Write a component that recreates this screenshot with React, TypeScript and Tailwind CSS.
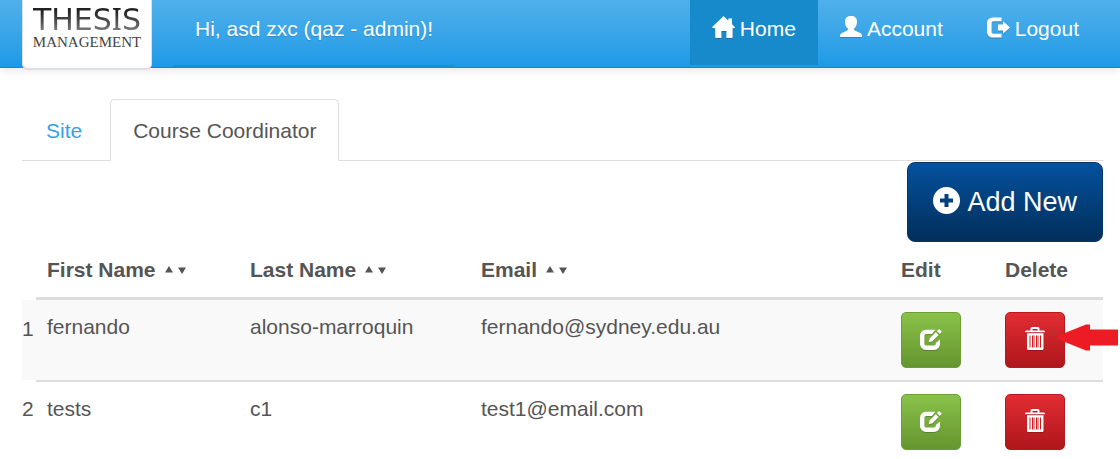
import React from "react";

type IconProps = { className?: string };

const HomeIcon = ({ className }: IconProps) => (
  <svg viewBox="0 0 23 22" width="23" height="22" fill="currentColor" className={className} aria-hidden="true">
    <path d="M11.6 0 0 11.2 1 12.2H3.2V21.2Q3.2 22 4 22H9.4V15H14.4V22H19.8Q20.6 22 20.6 21.2V12.2H22.4L23 11.2 20 8.2V2.5H16.3V4.7Z" />
  </svg>
);

const UserIcon = ({ className }: IconProps) => (
  <svg viewBox="0 0 22 21" width="22" height="21" fill="currentColor" className={className} aria-hidden="true">
    <path d="M11 0C14.8 0 17 2 17 5.4 17 9 15.9 11.2 14.2 12.6V14.2L20.6 17.2Q22 18 22 19.4V21H0V19.4Q0 18 1.4 17.2L7.8 14.2V12.6C6.1 11.2 5 9 5 5.4 5 2 7.2 0 11 0Z" />
  </svg>
);

const LogoutIcon = ({ className }: IconProps) => (
  <svg viewBox="0 0 23 22" width="23" height="22" fill="currentColor" className={className} aria-hidden="true">
    <path d="M14.5 1.5H5.5A5.5 5.5 0 0 0 0 7V16A5.5 5.5 0 0 0 5.5 21.5H14.5V17.8H6.3Q4.600 17.8 4.600 16.1V6.9Q4.6 5.2 6.3 5.2H14.5Z" />
    <path d="M16 5.3 23 11.5 16 17.7V14.5H11V8.5H16Z" />
  </svg>
);

const PlusIcon = ({ className }: IconProps) => (
  <svg viewBox="0 0 27 27" width="27" height="27" fill="currentColor" className={className} aria-hidden="true">
    <path
      fillRule="evenodd"
      d="M13.5 0A13.5 13.5 0 1 1 13.5 27A13.5 13.5 0 1 1 13.5 0ZM11.5 7V11.5H7V15.5H11.5V20H15.5V15.5H20V11.5H15.5V7Z"
    />
  </svg>
);

const EditIcon = ({ className }: IconProps) => (
  <svg viewBox="0 0 22 21" width="22" height="21" fill="currentColor" className={className} aria-hidden="true">
    <path d="M15.3 .8H6A6 6 0 0 0 0 6.8V15A6 6 0 0 0 6 21H14A6 6 0 0 0 20 15V10.5L15.8 14V14.8Q15.8 16.6 14 16.6H6.2Q4.4 16.6 4.4 14.8V6.8Q4.4 5 6.2 5H12Z" />
    <path d="M8.7 13.3 9.6 9.6 15.8 3.2 18.6 5.9 12.4 12.3Z" />
    <path d="M16.9 2.1 18.6 .4Q19.1 0 19.6 .4L21.5 2.3Q22 2.8 21.5 3.3L19.7 4.9Z" />
  </svg>
);

const TrashIcon = ({ className }: IconProps) => (
  <svg viewBox="0 0 20 23" width="20" height="23" className={className} aria-hidden="true">
    <path
      fill="currentColor"
      fillRule="evenodd"
      d="M5.5 3.5V1.5Q5.5 0 7 0H13Q14.5 0 14.5 1.5V3.5H19Q20 3.5 20 5.2H0Q0 3.5 1 3.5ZM7.5 2V3.5H12.5V2Z"
    />
    <path fill="currentColor" d="M2 6.3H18.5V21.5Q18.5 23 17 23H3.5Q2 23 2 21.5Z" />
    <path stroke="#e88f92" strokeWidth="2" d="M5 8.5V20.5M9 8.5V20.500M13 8.5V20.5" />
    <path stroke="#cc1c22" strokeWidth="1" d="M7.5 8.5V20.5M11.5 8.5V20.5M15.5 8.5V20.5" />
  </svg>
);

const Pointer = () => (
  <svg viewBox="0 0 62 27" width="62" height="27" fill="#ed1c24" className="pointer-events-none absolute left-16 top-6" aria-hidden="true">
    <path d="M0 13.5 4 10.5 29 .5H33V5.5H61V21.5H33V26.5H29L4 16.5Z" />
  </svg>
);

const columns = ["First Name", "Last Name", "Email"];

const rows = [
  { first: "fernando", last: "alonso-marroquin", email: "fernando@sydney.edu.au" },
  { first: "tests", last: "c1", email: "test1@email.com" },
];

const navItems = [
  { label: "Home", Icon: HomeIcon, active: true },
  { label: "Account", Icon: UserIcon, active: false },
  { label: "Logout", Icon: LogoutIcon, active: false },
];

function Sorter({ name }: { name: string }) {
  return (
    <span className="ml-[9px] inline-flex gap-[5px] pb-[3px] align-middle">
      <button type="button" aria-label={`Sort by ${name} ascending`}>
        <svg viewBox="0 0 8 8" width="8" height="8" fill="currentColor">
          <path d="M0 6.5 4 0 8 6.5Z" />
        </svg>
      </button>
      <button type="button" aria-label={`Sort by ${name} descending`}>
        <svg viewBox="0 0 8 8" width="8" height="8" fill="currentColor">
          <path d="M0 1.5H8L4 8Z" />
        </svg>
      </button>
    </span>
  );
}

function Header() {
  return (
    <header className="flex items-start border-b border-[#178acc] bg-linear-to-b from-[#4fb0ea] to-[#1b9ae6] pl-[22px] pr-[19px] text-white shadow-[0_1px_10px_rgba(0,0,0,0.12)]">
      <a
        href="#"
        className="-mb-[3px] flex h-[70px] w-[130px] shrink-0 flex-col items-center rounded-b-md border border-t-0 border-b-2 border-[#dcdfe1] bg-white"
      >
        <span className="mt-[2px] bg-linear-to-b from-[#222] from-25% to-[#888] to-90% bg-clip-text font-['DejaVu_Sans'] text-[30px] leading-[34px] text-transparent">
          THES<span className="font-['Noto_Sans']">I</span>S
        </span>
        <span className="-mt-1 font-['Liberation_Serif'] text-[15px] leading-[18px] text-[#444]">MANAGEMENT</span>
      </a>
      <p className="ml-[21px] border-b-2 border-[#1b8fd4] px-[22px] pb-[21px] pt-[14px] [text-shadow:0_1px_1px_rgba(0,0,0,0.15)]">
        Hi, asd zxc (qaz - admin)!
      </p>
      <nav className="ml-auto flex">
        {navItems.map(({ label, Icon, active }) => (
          <a
            key={label}
            href="#"
            className={
              active
                ? "flex gap-[5px] bg-[#178acc] px-[22px] pb-[21px] pt-[14px]"
                : "flex gap-[5px] px-[22px] pb-[21px] pt-[14px]"
            }
          >
            <Icon className="mt-[2px] drop-shadow-[0_1px_0_rgba(0,0,0,0.2)]" />
            {label}
          </a>
        ))}
      </nav>
    </header>
  );
}

export default function App() {
  return (
    <div className="min-h-screen bg-white font-['Liberation_Sans',sans-serif] text-[21px] leading-[30px] text-[#555]">
      <Header />
      <main className="pb-2 pl-[22px] pr-[17px] pt-[31px]">
        <ul className="flex gap-1 border-b border-[#ddd]">
          <li>
            <a href="#" className="block px-6 pt-[17px] text-[#2fa4e7]">
              Site
            </a>
          </li>
          <li className="-mb-px">
            <a href="#" className="block rounded-t-[5px] border border-[#ddd] border-b-white bg-white px-[22px] pb-[14px] pt-4">
              Course Coordinator
            </a>
          </li>
        </ul>
        <div className="flex justify-end pt-px">
          <button
            type="button"
            className="flex gap-[7px] rounded-lg border border-[#02366b] bg-linear-to-b from-[#04519e] to-[#022f5c] px-[25px] py-6 text-[27px] leading-[30px] text-white"
          >
            <PlusIcon />
            Add New
          </button>
        </div>
        <table className="w-full table-fixed border-separate border-spacing-0 text-left">
          <colgroup>
            <col className="w-[14px]" />
            <col className="w-[203px]" />
            <col className="w-[231px]" />
            <col />
            <col className="w-[104px]" />
            <col className="w-[110px]" />
          </colgroup>
          <thead>
            <tr>
              <td />
              {columns.map((name) => (
                <th key={name} scope="col" className="border-b-[3px] border-[#ddd] px-[11px] pb-3 pt-[13px]">
                  {name}
                  <Sorter name={name} />
                </th>
              ))}
              <th scope="col" className="border-b-[3px] border-[#ddd] px-3 pb-3 pt-[13px]">
                Edit
              </th>
              <th scope="col" className="border-b-[3px] border-[#ddd] px-3 pb-3 pt-[13px]">
                Delete
              </th>
            </tr>
          </thead>
          <tbody className="[&>tr+tr>td+td]:border-t-2 [&>tr+tr>td]:border-[#ddd] [&>tr:nth-child(odd)]:bg-[#f9f9f9]">
            {rows.map((row, i) => (
              <tr key={row.email} className="align-top">
                <td className="pt-[14px]">{i + 1}</td>
                <td className="px-[11px] py-3">{row.first}</td>
                <td className="px-[11px] py-3">{row.last}</td>
                <td className="px-[11px] py-3">{row.email}</td>
                <td className="px-3 py-3">
                  <button
                    type="button"
                    aria-label={`Edit ${row.first}`}
                    className="flex h-14 items-center rounded-[5px] border border-[#6b9e33] bg-linear-to-b from-[#89c24a] to-[#66952f] px-[18px] pb-[2px] text-white"
                  >
                    <EditIcon className="drop-shadow-[0_1px_0_rgba(0,0,0,0.2)]" />
                  </button>
                </td>
                <td className="relative px-3 py-3">
                  <button
                    type="button"
                    aria-label={`Delete ${row.first}`}
                    className="flex h-14 items-center rounded-[5px] border border-[#b5181d] bg-linear-to-b from-[#e22d33] to-[#ae161b] px-[19px] pb-1 text-white"
                  >
                    <TrashIcon className="drop-shadow-[0_1px_0_rgba(0,0,0,0.2)]" />
                  </button>
                  {i === 0 && <Pointer />}
                </td>
              </tr>
            ))}
          </tbody>
        </table>
      </main>
    </div>
  );
}
